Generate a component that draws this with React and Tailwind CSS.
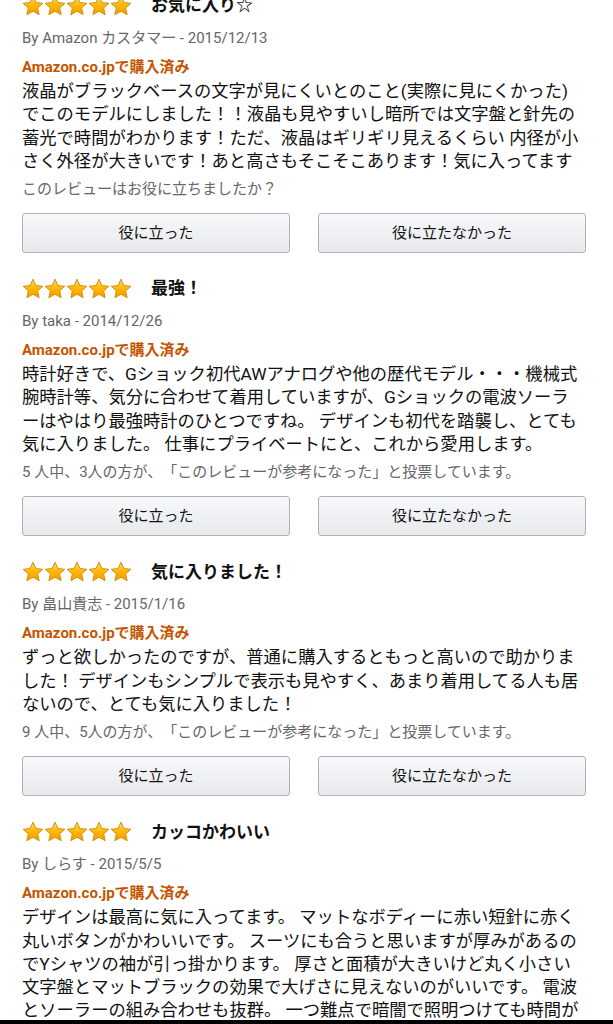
const reviews = [
  {
    title: "お気に入り☆",
    by: "By Amazon カスタマー - 2015/12/13",
    body: [
      "液晶がブラックベースの文字が見にくいとのこと(実際に見にくかった)",
      "でこのモデルにしました！！液晶も見やすいし暗所では文字盤と針先の",
      "蓄光で時間がわかります！ただ、液晶はギリギリ見えるくらい 内径が小",
      "さく外径が大きいです！あと高さもそこそこあります！気に入ってます",
    ],
    vote: "このレビューはお役に立ちましたか？",
  },
  {
    title: "最強！",
    by: "By taka - 2014/12/26",
    body: [
      "時計好きで、Gショック初代AWアナログや他の歴代モデル・・・機械式",
      "腕時計等、気分に合わせて着用していますが、Gショックの電波ソーラ",
      "ーはやはり最強時計のひとつですね。 デザインも初代を踏襲し、とても",
      "気に入りました。 仕事にプライベートにと、これから愛用します。",
    ],
    vote: "5 人中、3人の方が、「このレビューが参考になった」と投票しています。",
  },
  {
    title: "気に入りました！",
    by: "By 畠山貴志 - 2015/1/16",
    body: [
      "ずっと欲しかったのですが、普通に購入するともっと高いので助かりま",
      "した！ デザインもシンプルで表示も見やすく、あまり着用してる人も居",
      "ないので、とても気に入りました！",
    ],
    vote: "9 人中、5人の方が、「このレビューが参考になった」と投票しています。",
  },
  {
    title: "カッコかわいい",
    by: "By しらす - 2015/5/5",
    body: [
      "デザインは最高に気に入ってます。 マットなボディーに赤い短針に赤く",
      "丸いボタンがかわいいです。 スーツにも合うと思いますが厚みがあるの",
      "でYシャツの袖が引っ掛かります。 厚さと面積が大きいけど丸く小さい",
      "文字盤とマットブラックの効果で大げさに見えないのがいいです。 電波",
      "とソーラーの組み合わせも抜群。 一つ難点で暗闇で照明つけても時間が",
      "見にくいです。",
    ],
    vote: "",
  },
];

const Star = ({ id }) => (
  <svg width="22" height="22" viewBox="0 0 24 24">
    <defs>
      <linearGradient id={id} x1="0" y1="0" x2="0" y2="1">
        <stop offset="0%" stopColor="#ffd966" />
        <stop offset="55%" stopColor="#ffb400" />
        <stop offset="100%" stopColor="#f29a00" />
      </linearGradient>
    </defs>
    <path
      d="M12 1.3l3.2 6.9 7.5.8-5.6 5.1 1.6 7.4L12 17.7l-6.7 3.8 1.6-7.4-5.6-5.1 7.5-.8z"
      fill={`url(#${id})`}
      stroke="#d18a00"
      strokeWidth="1"
      strokeLinejoin="round"
    />
  </svg>
);

const Review = ({ r, idx }) => (
  <div className="flex flex-col mb-[25px]">
    <div className="flex items-center h-[22px]">
      <div className="flex">
        {[0, 1, 2, 3, 4].map((i) => (
          <Star key={i} id={`g${idx}-${i}`} />
        ))}
      </div>
      <span className="ml-[19px] text-[17px] font-bold text-[#111] whitespace-nowrap">{r.title}</span>
    </div>
    <div className="mt-[11px] text-[15px] leading-[20px] text-[#666]">{r.by}</div>
    <div className="mt-[9px] text-[15px] leading-[20px] font-bold text-[#c45500]">
      Amazon.co.jpで購入済み
    </div>
    <div className="mt-[3px] text-[17.3px] leading-[23.3px] text-[#111]">
      {r.body.map((line, i) => (
        <div key={i} className="whitespace-nowrap">
          {line}
        </div>
      ))}
    </div>
    {r.vote && (
      <>
        <div className="mt-[6px] text-[15px] leading-[20px] text-[#666] whitespace-nowrap">{r.vote}</div>
        <div className="mt-[14px] w-[564px] grid grid-cols-2 gap-[28px]">
          <button className="h-[40px] rounded-[3px] border border-[#adb1b8] bg-gradient-to-b from-[#f7f8fa] to-[#e7e9ec] text-[15px] text-[#111]">
            役に立った
          </button>
          <button className="h-[40px] rounded-[3px] border border-[#adb1b8] bg-gradient-to-b from-[#f7f8fa] to-[#e7e9ec] text-[15px] text-[#111]">
            役に立たなかった
          </button>
        </div>
      </>
    )}
  </div>
);

export default function App() {
  return (
    <div
      className="h-[1024px] w-full flex flex-col bg-white overflow-hidden [text-spacing-trim:space-all]"
      style={{ fontFamily: 'Roboto, "Noto Sans CJK JP", sans-serif' }}
    >
      <div className="flex-1 overflow-hidden px-[22px]">
        <div className="-mt-[5px]">
          {reviews.map((r, i) => (
            <Review key={i} r={r} idx={i} />
          ))}
        </div>
      </div>
      <div className="h-[4px] bg-black shrink-0" />
    </div>
  );
}
